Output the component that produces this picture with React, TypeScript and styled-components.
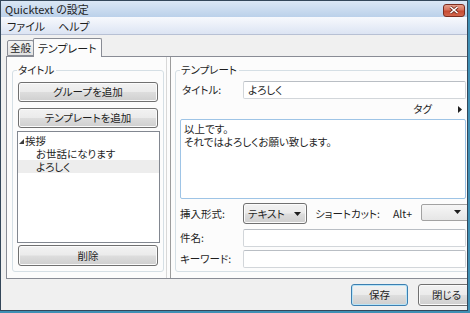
import React from 'react';
import styled, { createGlobalStyle } from 'styled-components';

const GlobalStyle = createGlobalStyle`
  html, body {
    margin: 0;
    padding: 0;
    background: #3f8fb4;
  }
  body {
    font-family: "Noto Sans CJK JP", "Noto Sans", sans-serif;
    font-size: 10.5px;
    font-feature-settings: "palt";
    color: #1e1e1e;
  }
  * {
    box-sizing: border-box;
  }
`;

const Window = styled.div`
  width: 468px;
  height: 311px;
  border: 1px solid #34475a;
  background: #f0f0f0;
  display: flex;
  flex-direction: column;
  overflow: hidden;
`;

const TitleBar = styled.div`
  height: 16px;
  display: flex;
  align-items: center;
  justify-content: space-between;
  padding: 0 2px 0 4px;
  background: linear-gradient(#dbe7f5, #bbd1ea);
  line-height: 14px;
  font-size: 11px;
`;

const CloseButton = styled.div`
  width: 22px;
  height: 13px;
  margin-top: 2px;
  border: 1px solid #7b2d20;
  border-radius: 3px;
  background: linear-gradient(#e5a08c 0%, #d7705a 45%, #c74a32 55%, #d2664c 100%);
  display: flex;
  align-items: center;
  justify-content: center;
`;

const MenuBar = styled.div`
  height: 18px;
  display: flex;
  align-items: center;
  gap: 13px;
  padding-left: 6px;
  background: linear-gradient(#f7f9fd, #dce4f3);
  border-bottom: 1px solid #b7c0d4;
  line-height: 14px;
  font-size: 11px;
`;

const TabStrip = styled.div`
  height: 20px;
  margin-top: 1px;
  display: flex;
  align-items: flex-end;
  padding-left: 6px;
`;

const Tab = styled.div<{ $active?: boolean }>`
  position: relative;
  height: ${p => (p.$active ? 19 : 16)}px;
  margin-bottom: ${p => (p.$active ? -1 : 0)}px;
  margin-left: ${p => (p.$active ? -1 : 0)}px;
  padding: 0 ${p => (p.$active ? 4 : 2)}px;
  border: 1px solid #898c95;
  border-bottom: ${p => (p.$active ? 'none' : '1px solid #898c95')};
  border-radius: 2px 2px 0 0;
  background: ${p => (p.$active ? '#fcfcfc' : 'linear-gradient(#f3f3f3, #e2e2e2)')};
  z-index: ${p => (p.$active ? 2 : 1)};
  display: flex;
  align-items: center;
  line-height: 14px;
  font-size: ${p => (p.$active ? 11 : 10.5)}px;
`;

const TabPanel = styled.div`
  margin-left: 5px;
  width: 480px;
  height: 223px;
  flex-shrink: 0;
  border: 1px solid #898c95;
  background: #fcfcfc;
  display: flex;
`;

const LeftPane = styled.div`
  padding: 13px 0 6px 5px;
  flex-shrink: 0;
`;

const Splitter = styled.div`
  width: 5px;
  margin: 0 4px 0 2px;
  border-left: 1px solid #d8d8d8;
  border-right: 1px solid #9c9c9c;
  flex-shrink: 0;
`;

const RightPane = styled.div`
  padding: 13px 0 5px 0;
  flex-shrink: 0;
`;

const GroupBox = styled.div<{ $width: number }>`
  position: relative;
  width: ${p => p.$width}px;
  height: 202px;
  border: 1px solid #d5dfe5;
  border-radius: 3px;
  display: flex;
  flex-direction: column;
`;

const Legend = styled.span`
  position: absolute;
  top: -8px;
  left: 4px;
  padding: 0 2px 0 1px;
  background: #fcfcfc;
  line-height: 14px;
`;

const LeftContent = styled.div`
  padding: 11px 5px 5px 5px;
  display: flex;
  flex-direction: column;
`;

const Button = styled.button<{ $w?: number; $h?: number; $default?: boolean }>`
  font: inherit;
  font-feature-settings: "palt";
  width: ${p => (p.$w ? `${p.$w}px` : '100%')};
  height: ${p => p.$h ?? 20}px;
  padding: 0;
  color: #1e1e1e;
  line-height: 14px;
  border: 1px solid ${p => (p.$default ? '#3c7fb1' : '#707070')};
  border-radius: 3px;
  background: linear-gradient(#f2f2f2 0%, #ebebeb 48%, #dddddd 52%, #cfcfcf 100%);
  box-shadow: inset 0 0 0 1px ${p => (p.$default ? '#b9e4f7' : '#fbfbfb')};
  flex-shrink: 0;
`;

const TreeList = styled.div`
  width: 143px;
  height: 112px;
  margin: 3px 0 2px -1px;
  border: 1px solid #828790;
  background: #ffffff;
  padding-top: 2px;
`;

const TreeRow = styled.div<{ $level: number; $selected?: boolean }>`
  height: 13px;
  line-height: 13px;
  display: flex;
  align-items: center;
  padding-left: ${p => (p.$level === 0 ? 1 : 18)}px;
  background: ${p => (p.$selected ? '#ededed' : 'transparent')};
`;

const Expander = styled.svg`
  width: 5px;
  height: 5px;
  margin: 2px 1px 0 0;
`;

const RightContent = styled.div`
  padding: 10px 5px 4px 4px;
  display: flex;
  flex-direction: column;
`;

const FieldRow = styled.div<{ $mt?: number; $h?: number }>`
  display: flex;
  align-items: center;
  height: ${p => p.$h ?? 18}px;
  margin-top: ${p => p.$mt ?? 0}px;
`;

const FieldLabel = styled.span<{ $indent?: number }>`
  width: 63px;
  flex-shrink: 0;
  padding-left: ${p => p.$indent ?? 0}px;
  line-height: 14px;
`;

const TextBox = styled.div`
  flex: 1;
  height: 100%;
  border: 1px solid #d2d6da;
  border-top-color: #b9bec4;
  border-radius: 2px;
  background: #ffffff;
  padding: 0 4px;
  display: flex;
  align-items: center;
  line-height: 14px;
`;

const TagRow = styled.div`
  height: 20px;
  display: flex;
  align-items: center;
  justify-content: flex-end;
  padding-right: 4px;
  line-height: 14px;
`;

const TagArrow = styled.svg`
  width: 4px;
  height: 7px;
  margin-left: 26px;
`;

const TextArea = styled.div`
  height: 80px;
  border: 1px solid #9ec4e6;
  border-radius: 2px;
  background: #ffffff;
  padding: 2px 3px;
  line-height: 13px;
`;

const DropButton = styled(Button)`
  display: flex;
  align-items: center;
  justify-content: space-between;
  padding: 0 5px 0 4px;
`;

const InlineLabel = styled.span<{ $ml: number }>`
  margin-left: ${p => p.$ml}px;
  line-height: 14px;
  white-space: nowrap;
`;

const Combo = styled.div`
  width: 50px;
  height: 17px;
  margin-left: 9px;
  margin-top: -3px;
  border: 1px solid #a2a2a2;
  border-radius: 2px;
  background: linear-gradient(#f6f6f6, #e6e6e6);
  display: flex;
  align-items: center;
  justify-content: flex-end;
  padding-right: 9px;
  flex-shrink: 0;
`;

const DownArrow = styled.svg`
  width: 7px;
  height: 4px;
`;

const ButtonBar = styled.div`
  display: flex;
  gap: 10px;
  padding: 5px 0 0 350px;
`;

function ArrowDown() {
  return (
    <DownArrow viewBox="0 0 7 4">
      <path d="M0 0H7L3.5 4Z" fill="#1e1e1e" />
    </DownArrow>
  );
}

export default function App() {
  return (
    <>
      <GlobalStyle />
      <Window>
        <TitleBar>
          <span>Quicktext の設定</span>
          <CloseButton>
            <svg width="10" height="8" viewBox="0 0 10 8">
              <path d="M1.5 1 L8.5 7 M8.5 1 L1.5 7" stroke="#6b2a1e" strokeWidth="3" />
              <path d="M1.5 1 L8.5 7 M8.5 1 L1.5 7" stroke="#ffffff" strokeWidth="1.6" />
            </svg>
          </CloseButton>
        </TitleBar>
        <MenuBar>
          <span>ファイル</span>
          <span>ヘルプ</span>
        </MenuBar>
        <TabStrip>
          <Tab>全般</Tab>
          <Tab $active>テンプレート</Tab>
        </TabStrip>
        <TabPanel>
          <LeftPane>
            <GroupBox $width={152}>
              <Legend>タイトル</Legend>
              <LeftContent>
                <Button>グループを追加</Button>
                <Button style={{ marginTop: 6 }}>テンプレートを追加</Button>
                <TreeList>
                  <TreeRow $level={0}>
                    <Expander viewBox="0 0 5 5">
                      <path d="M5 0V5H0Z" fill="#3c3c3c" />
                    </Expander>
                    挨拶
                  </TreeRow>
                  <TreeRow $level={1}>お世話になります</TreeRow>
                  <TreeRow $level={1} $selected>
                    よろしく
                  </TreeRow>
                </TreeList>
                <Button $h={21}>削除</Button>
              </LeftContent>
            </GroupBox>
          </LeftPane>
          <Splitter />
          <RightPane>
            <GroupBox $width={297}>
              <Legend>テンプレート</Legend>
              <RightContent>
                <FieldRow>
                  <FieldLabel $indent={2}>タイトル:</FieldLabel>
                  <TextBox>よろしく</TextBox>
                </FieldRow>
                <TagRow>
                  タグ
                  <TagArrow viewBox="0 0 4 7">
                    <path d="M0 0L4 3.5L0 7Z" fill="#1e1e1e" />
                  </TagArrow>
                </TagRow>
                <TextArea>
                  以上です。
                  <br />
                  それではよろしくお願い致します。
                </TextArea>
                <FieldRow $mt={4} $h={21}>
                  <FieldLabel>挿入形式:</FieldLabel>
                  <DropButton $w={64} $h={21}>
                    テキスト
                    <ArrowDown />
                  </DropButton>
                  <InlineLabel $ml={8}>ショートカット:</InlineLabel>
                  <InlineLabel $ml={13}>Alt+</InlineLabel>
                  <Combo>
                    <ArrowDown />
                  </Combo>
                </FieldRow>
                <FieldRow $mt={5}>
                  <FieldLabel>件名:</FieldLabel>
                  <TextBox />
                </FieldRow>
                <FieldRow $mt={3}>
                  <FieldLabel>キーワード:</FieldLabel>
                  <TextBox />
                </FieldRow>
              </RightContent>
            </GroupBox>
          </RightPane>
        </TabPanel>
        <ButtonBar>
          <Button $w={57} $h={22} $default>
            保存
          </Button>
          <Button $w={57} $h={22}>
            閉じる
          </Button>
        </ButtonBar>
      </Window>
    </>
  );
}
